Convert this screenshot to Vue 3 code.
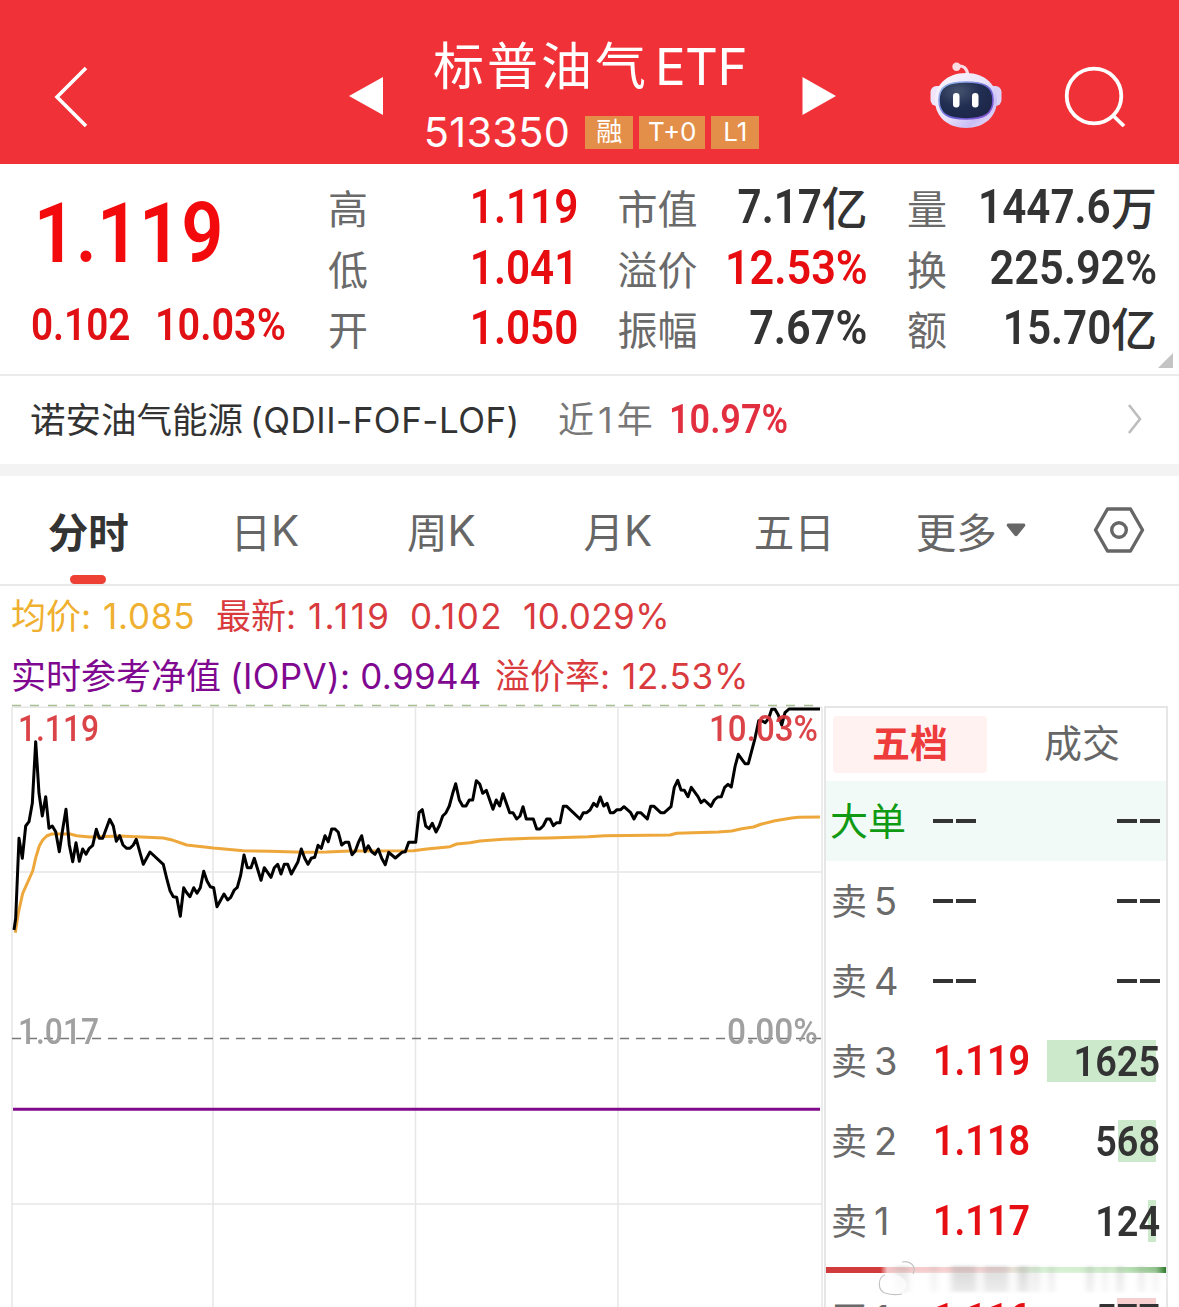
<template>
  <div class="page">
    <header class="topbar">
      <svg class="back" width="36" height="64" viewBox="0 0 36 64">
        <path d="M33 4 L4 33 L33 62" fill="none" stroke="#fff" stroke-width="3.6" />
      </svg>
      <svg class="prev" width="34" height="38" viewBox="0 0 34 38"><path d="M0 19 L34 0 V38 Z" fill="#fff" /></svg>

      <div class="title-block">
        <div class="title">标普油气<span class="title-latin">ETF</span></div>
        <div class="code-row">
          <span class="code">513350</span>
          <span v-for="tag in tags" :key="tag" class="tag" :class="{ wide: tag.length > 2 }">{{ tag }}</span>
        </div>
      </div>

      <svg width="34" height="38" viewBox="0 0 34 38"><path d="M0.500 0 L34 19 L0.500 38 Z" fill="#fff" /></svg>

      <svg class="robot" width="72" height="68" viewBox="0 0 72 68">
        <defs>
          <linearGradient id="shell" x1="0" y1="0" x2="1" y2="1">
            <stop offset="0" stop-color="#fdf6fb" />
            <stop offset="0.5" stop-color="#e9e3fb" />
            <stop offset="0.75" stop-color="#c9bef5" />
            <stop offset="1" stop-color="#f6e9fa" />
          </linearGradient>
          <linearGradient id="rim" x1="0" y1="0" x2="1" y2="1">
            <stop offset="0" stop-color="#9ec6ee" />
            <stop offset="0.6" stop-color="#6a62d8" />
            <stop offset="1" stop-color="#8b4fd0" />
          </linearGradient>
          <radialGradient id="face" cx="0.35" cy="0.25" r="0.8">
            <stop offset="0" stop-color="#46536f" />
            <stop offset="0.5" stop-color="#222f52" />
            <stop offset="1" stop-color="#1b2548" />
          </radialGradient>
        </defs>
        <path d="M27 4.500 C33 3 37 6 38 13" fill="none" stroke="#fbdde8" stroke-width="3" />
        <circle cx="26.500" cy="4.800" r="4.200" fill="#fbdce4" />
        <rect x="0.500" y="24" width="14" height="20" rx="6" fill="#f0e4fa" />
        <rect x="57.500" y="24" width="14" height="20" rx="6" fill="#dcd2f7" />
        <path d="M36 11 C56 11 67 24 67 38 C67 55 54 66 36 66 C18 66 5 55 5 38 C5 24 16 11 36 11 Z" fill="url(#shell)" />
        <path d="M36 20 C54 20 63 24 63 38 C63 52 54 57 36 57 C18 57 9 52 9 38 C9 24 18 20 36 20 Z" fill="url(#face)" stroke="url(#rim)" stroke-width="1.600" />
        <rect x="23" y="31" width="6.500" height="14.500" rx="3.200" fill="#fff" />
        <rect x="42" y="31" width="6.500" height="14.500" rx="3.200" fill="#fff" />
      </svg>

      <svg class="search" width="62" height="62" viewBox="0 0 62 62">
        <circle cx="30" cy="31" r="27.300" fill="none" stroke="#fff" stroke-width="3.800" />
        <path d="M49 50.500 L60 61" stroke="#fff" stroke-width="3.800" />
      </svg>
    </header>

    <section class="quote">
      <div class="quote-main">
        <div class="price num">1.119</div>
        <div class="change">
          <span class="num slim">0.102</span>
          <span class="num">10.03%</span>
        </div>
      </div>
      <div class="stats">
        <div v-for="s in stats" :key="s.label" class="stat">
          <span class="stat-label">{{ s.label }}</span>
          <span class="stat-value" :class="{ up: s.up }">
            <span class="num" :class="{ slim: !s.value.includes('%') }">{{ s.value }}</span>
            <span v-if="s.unit" class="unit">{{ s.unit }}</span>
          </span>
        </div>
      </div>
      <i class="corner"></i>
    </section>

    <section class="fund">
      <span class="fund-name">诺安油气能源<span class="fund-latin">(QDII-FOF-LOF)</span></span>
      <span class="fund-period">近<span class="one">1</span>年</span>
      <span class="fund-value num">10.97%</span>
      <svg class="chevron" width="16" height="32" viewBox="0 0 16 32">
        <path d="M2 1 L13 15 L2 29" fill="none" stroke="#bdbdbd" stroke-width="2.600" />
      </svg>
    </section>

    <nav class="tabs">
      <div v-for="t in tabs" :key="t.name" class="tab" :class="{ active: t.name === activeTab }" @click="activeTab = t.name">
        {{ t.name }}<span v-if="t.latin" class="tab-latin">{{ t.latin }}</span>
        <svg v-if="t.more" class="caret" width="20" height="14" viewBox="0 0 20 14">
          <path d="M1.500 0.500 H18.500 L19.500 2.500 L11.500 12.500 Q10 14 8.500 12.500 L0.500 2.500 Z" fill="#666" />
        </svg>
      </div>
      <div class="settings">
        <svg width="52" height="46" viewBox="0 0 52 46">
          <path d="M14.500 2 H37.500 L49.500 23 L37.500 44 H14.500 L2.500 23 Z" fill="none" stroke="#666" stroke-width="3.400" stroke-linejoin="round" />
          <circle cx="26" cy="23" r="7.300" fill="none" stroke="#666" stroke-width="3.400" />
        </svg>
      </div>
    </nav>

    <section class="summary">
      <div class="summary-row">
        <span class="avg">均价: <b class="avg-value">1.085</b></span>
        <span class="last">最新: <b class="loose">1.119</b></span>
        <span class="diff">0.102</span>
        <span class="pct">10.029%</span>
      </div>
      <div class="summary-row">
        <span class="iopv">实时参考净值<b class="iopv-name">(IOPV):</b> <b>0.9944</b></span>
        <span class="premium">溢价率: <b class="premium-value">12.53%</b></span>
      </div>
    </section>

    <section class="market">
      <svg class="chart" width="824" height="603" viewBox="0 704 824 603">
        <g stroke="#e6e6e6" stroke-width="1.500">
          <path d="M12 707 V1307 M213 707 V1307 M415.500 707 V1307 M618 707 V1307 M822 707 V1307" />
          <path d="M12 707.300 H822 M12 872 H822 M12 1204 H822" />
        </g>
        <path d="M12 705.500 H822" stroke="#a9bd93" stroke-width="1.400" stroke-dasharray="9 9" />
        <path d="M12 1038.500 H822" stroke="#777" stroke-width="1.600" stroke-dasharray="9 7" />
        <path d="M13 1109.200 H820" stroke="#800a8c" stroke-width="3" />
        <polyline :points="avgLine" fill="none" stroke="#eda73a" stroke-width="3" stroke-linejoin="round" />
        <polyline :points="priceLine" fill="none" stroke="#000" stroke-width="3" stroke-linejoin="round" />
        <g class="axis">
          <text x="18" y="741" textLength="81" lengthAdjust="spacingAndGlyphs" fill="#d8353b">1.119</text>
          <text x="709" y="741" textLength="109" lengthAdjust="spacingAndGlyphs" fill="#d8353b">10.03%</text>
          <text x="18" y="1044" textLength="81" lengthAdjust="spacingAndGlyphs" fill="#999">1.017</text>
          <text x="727" y="1044" textLength="91" lengthAdjust="spacingAndGlyphs" fill="#999">0.00%</text>
        </g>
      </svg>

      <aside class="book">
        <div class="book-tabs">
          <span class="book-tab on">五档</span>
          <span class="book-tab">成交</span>
        </div>
        <div class="level big">
          <span class="level-name">大单</span>
          <span class="dash"><i></i><i></i></span>
          <span class="dash end"><i></i><i></i></span>
        </div>
        <div v-for="l in asks" :key="l.n" class="level">
          <span class="level-name">卖<span class="level-no">{{ l.n }}</span></span>
          <template v-if="l.price">
            <span class="level-price num">{{ l.price }}</span>
            <span class="level-qty">
              <i class="bar" :style="{ width: l.bar + 'px' }"></i>
              <span class="num">{{ l.qty }}</span>
            </span>
          </template>
          <template v-else>
            <span class="dash"><i></i><i></i></span>
            <span class="dash end"><i></i><i></i></span>
          </template>
        </div>
        <div class="ratio"><i></i></div>
        <div class="level">
          <span class="level-name">买<span class="level-no">1</span></span>
          <span class="level-price num">1.116</span>
          <span class="level-qty">
            <i class="bar buy"></i>
            <span class="num">577</span>
          </span>
        </div>

        <!-- faded watermark strip over the bid/ask ratio -->
        <svg class="smudge" width="300" height="40" viewBox="0 0 300 40">
          <defs>
            <filter id="soft" x="-5%" y="-20%" width="110%" height="140%"><feGaussianBlur stdDeviation="3 1.500" /></filter>
            <linearGradient id="fade" x1="0" y1="0" x2="0" y2="1">
              <stop offset="0" stop-color="#999" />
              <stop offset="1" stop-color="#ccc" />
            </linearGradient>
          </defs>
          <g filter="url(#soft)">
            <rect x="12" y="14" width="278" height="20" rx="8" fill="#fff" opacity="0.6" />
            <rect v-for="(s, i) in smudges" :key="i" :x="s[0]" y="7" :width="s[1]" height="26" fill="url(#fade)" :opacity="s[2]" />
          </g>
          <path d="M11 17 C4 19 4 30 11 33 C19 35 28 34 31 29 C35 20 20 12 11 17 Z" fill="#fff" opacity="0.7" />
          <path d="M27 3 C35 1 42 7 38 15 M10 16 C3 18 2 31 10 34 C16 36 22 36 27 35" fill="none" stroke="#c4c4c4" stroke-width="1.200" />
        </svg>
      </aside>
    </section>
  </div>
</template>

<script setup>
import { ref } from "vue";

const tags = ["融", "T+0", "L1"];

const stats = [
  { label: "高", value: "1.119", up: true },
  { label: "市值", value: "7.17", unit: "亿" },
  { label: "量", value: "1447.6", unit: "万" },
  { label: "低", value: "1.041", up: true },
  { label: "溢价", value: "12.53%", up: true },
  { label: "换", value: "225.92%" },
  { label: "开", value: "1.050", up: true },
  { label: "振幅", value: "7.67%" },
  { label: "额", value: "15.70", unit: "亿" },
];

const activeTab = ref("分时");
const tabs = [
  { name: "分时" },
  { name: "日", latin: "K" },
  { name: "周", latin: "K" },
  { name: "月", latin: "K" },
  { name: "五日" },
  { name: "更多", more: true },
];

const asks = [
  { n: 5 },
  { n: 4 },
  { n: 3, price: "1.119", qty: "1625", bar: 109 },
  { n: 2, price: "1.118", qty: "568", bar: 38 },
  { n: 1, price: "1.117", qty: "124", bar: 8 },
];

// x, width, opacity
const smudges = [
  [20, 14, 0.25], [56, 6, 0.2], [76, 26, 0.4], [108, 26, 0.35], [142, 12, 0.4], [157, 8, 0.25],
  [174, 5, 0.3], [212, 6, 0.35], [228, 4, 0.25], [242, 6, 0.35], [264, 5, 0.3], [278, 5, 0.2],
];

// each part: x offset, then "x,y" pairs in thirds of a pixel
const pricePart = [
  [0, "42,690 47,655 57,415 67,475 77,378 87,365 97,310 107,125 117,280 127,348 137,290 147,385 157,378 167,395 178,455 187,395 198,328 208,435 218,485 228,428 238,484 248,447 258,463 268,445 278,436 289,388 298,415 308,415 318,388 329,358 340,378 349,424 359,407 369,435 380,445 390,445 400,435 409,418 430,493 450,456 490,493 500,535 510,572 520,590 530,592 541,649 551,563 560,578 570,590 581,563 591,580 601,563 611,514 621,543 631,560 641,563 651,620 672,582 683,600 692,592 703,570 712,562 722,525 732,465 742,503 753,503 763,475 783,541 793,503 813,532"],
  [810, "13,503 23,493 33,522 43,493 53,493 64,522 84,485 94,447 104,475 114,493 124,475 134,472 144,436 154,445 165,407 175,425 185,387 195,387 205,397 215,435 225,427 236,427 246,464 256,453 265,428 275,407 285,455 295,437 305,455 315,463 325,447 335,475 346,494 356,457 376,474 396,457 406,455 416,427 437,427 447,338 457,329 467,378 477,386 487,370 498,396 508,377 518,348 528,338 538,318 548,280 557,251 568,300 578,318 588,318 598,300 608,300 619,242 629,252 638,280 649,271 669,328 679,300 689,318 699,281 719,338 729,338 740,357 750,348 759,320 769,357 790,357 800,387 810,387 820,377"],
  [1635, "5,357 15,357 25,377 35,368 45,368 55,319 65,319 105,357 115,338 125,338 135,330 146,310 156,319 166,291 176,318 186,310 196,338 206,338 216,329 227,329 237,320 257,338 267,357 277,338 287,338 307,357 317,319 327,319 347,338 358,338 378,320 388,262 398,241 408,270 418,271 429,290 439,262 459,290 468,308 478,300 498,319 508,300 518,291 529,290 539,262 549,253 559,261 570,200 580,163 600,191 610,191 630,115 641,62 651,62 661,68 671,55 680,28 690,28 700,45 710,75 720,38 732,27 825,27"],
];
const avgPart = [
  [0, "46,698 55,640 68,580 98,513 108,470 118,438 128,420 140,408 155,402 210,402 230,407 270,411 360,408 490,414 520,421 560,435 640,444 730,452"],
  [810, "0,454 100,457 170,456 240,453 430,452 470,447 540,440 560,432 600,428 630,423 700,418 780,415"],
  [1635, "10,414 130,410 180,407 375,405 395,400 520,396 560,393 590,386 625,381 650,372 690,362 740,354 760,352 825,351"],
];

function toPoints(parts) {
  return parts
    .flatMap(([dx, str]) =>
      str.split(" ").map((p) => {
        const [x, y] = p.split(",").map(Number);
        return `${((x + dx) / 3).toFixed(1)},${(700 + y / 3).toFixed(1)}`;
      })
    )
    .join(" ");
}

const priceLine = toPoints(pricePart);
const avgLine = toPoints(avgPart);
</script>

<style>
body {
  margin: 0;
  background: #fff;
}
</style>

<style scoped>
.page {
  width: 1179px;
  height: 1307px;
  overflow: hidden;
  background: #fff;
  color: #333;
  font-family: Inter, "Noto Sans CJK SC", sans-serif;
}

.num {
  display: inline-block;
  font-family: Roboto, sans-serif;
  font-weight: 570;
  transform: scaleX(0.9);
  transform-origin: left center;
  white-space: nowrap;
}

.num.slim {
  transform: scaleX(0.88);
}

/* top bar */
.topbar {
  box-sizing: border-box;
  height: 164px;
  padding: 28px 53px 0;
  display: flex;
  align-items: center;
  background: #f03138;
  color: #fff;
}

.prev {
  margin-left: 260px;
}

.title-block {
  width: 419px;
  height: 136px;
}

.title {
  height: 76px;
  line-height: 70px;
  padding-right: 5px;
  text-align: center;
  font-family: "Noto Sans CJK SC", sans-serif;
  font-size: 51px;
  font-weight: 400;
  letter-spacing: 3px;
  white-space: nowrap;
}

.title-latin {
  margin-left: 6px;
  font-family: Inter, sans-serif;
  font-size: 51px;
  letter-spacing: -0.5px;
}

.code-row {
  height: 56px;
  padding-right: 2px;
  display: flex;
  align-items: center;
  justify-content: center;
}

.code {
  margin-right: 15px;
  font-size: 41.500px;
  letter-spacing: 0.3px;
}

.tag {
  width: 48px;
  height: 33px;
  margin-right: 6px;
  line-height: 32px;
  text-align: center;
  font-size: 26px;
  background: #e48f49;
}

.tag:last-child {
  margin-right: 0;
}

.tag.wide {
  width: 66px;
}

.robot {
  margin-left: 94px;
}

.search {
  margin-left: 62px;
}

/* quote */
.quote {
  position: relative;
  box-sizing: border-box;
  height: 212px;
  padding: 13px 22px 0 31px;
  display: flex;
  justify-content: space-between;
  border-bottom: 2px solid #ebebeb;
}

.quote-main {
  color: #f20a0c;
}

.price {
  height: 112px;
  line-height: 114px;
  padding-left: 3px;
  font-size: 84px;
  transform: scaleX(0.88);
}

.change {
  display: grid;
  grid-template-columns: 124px 139px;
  line-height: 72px;
  font-size: 44px;
  color: #e01014;
}

.stats {
  display: grid;
  grid-template-columns: repeat(3, 250px);
  grid-auto-rows: 60.500px;
  column-gap: 39.500px;
}

.stat {
  display: flex;
  justify-content: space-between;
  align-items: center;
  line-height: 60px;
}

.stat-label {
  font-family: "Noto Sans CJK SC", sans-serif;
  font-size: 40px;
  font-weight: 400;
  color: #6a6a6a;
}

.stat-value {
  display: flex;
  align-items: center;
  font-size: 48px;
}

.stat-value.up {
  color: #e60c10;
}

.stat-value .num {
  transform-origin: right center;
}

.unit {
  height: 64px;
  font-family: "Noto Sans CJK SC", sans-serif;
  font-size: 46px;
  font-weight: 500;
}

.corner {
  position: absolute;
  right: 6px;
  bottom: 6px;
  border-left: 15px solid transparent;
  border-bottom: 15px solid #c4c4c4;
}

/* linked fund */
.fund {
  height: 88px;
  padding: 0 36px 0 30px;
  display: flex;
  align-items: center;
  line-height: 88px;
  border-bottom: 12px solid #f3f3f4;
}

.fund-name {
  width: 528px;
  font-size: 35.500px;
  white-space: nowrap;
}

.fund-latin {
  margin-left: 7px;
  font-size: 35px;
  letter-spacing: 0.5px;
}

.fund-period {
  width: 111px;
  font-size: 36px;
  color: #777;
  white-space: nowrap;
}

.fund-period .one {
  margin: 0 4px;
}

.fund-value {
  font-size: 40px;
  color: #e22f40;
}

.chevron {
  margin-left: auto;
}

/* period tabs */
.tabs {
  height: 108px;
  display: flex;
  border-bottom: 2px solid #e9e9e9;
}

.tab {
  position: relative;
  width: 176.500px;
  display: flex;
  align-items: center;
  justify-content: center;
  font-size: 40.500px;
  color: #666;
}

.tab-latin {
  font-size: 42px;
}

.tab.active {
  font-weight: 700;
  color: #333;
}

.tab.active::after {
  content: "";
  position: absolute;
  left: 70px;
  bottom: 0;
  width: 36px;
  height: 9px;
  border-radius: 4.500px;
  background: #ee4035;
}

.caret {
  margin-left: 9px;
}

.settings {
  flex: 1;
  display: flex;
  align-items: center;
  justify-content: center;
}

/* summary lines above the chart */
.summary {
  height: 118px;
  padding-left: 11px;
}

.summary-row {
  height: 60px;
  display: flex;
  align-items: baseline;
  line-height: 61px;
  font-size: 35px;
  color: #d93a3d;
  white-space: nowrap;
}

.summary-row b {
  font-weight: 400;
  letter-spacing: 0.3px;
}

.summary-row b.loose {
  margin-left: 2px;
  letter-spacing: 2.4px;
}

.summary-row b.avg-value {
  margin-left: 2px;
  letter-spacing: 0.8px;
}

.summary-row b.premium-value {
  margin-left: 2px;
  letter-spacing: 0.8px;
}

.avg {
  width: 205px;
  color: #f0b02f;
}

.last {
  width: 194px;
}

.diff {
  width: 113px;
  letter-spacing: 1.4px;
}

.pct {
  letter-spacing: 0.4px;
}

.iopv {
  width: 484px;
  color: #800890;
}

.iopv-name {
  margin-left: 9px;
}

/* chart + order book */
.market {
  height: 603px;
  display: flex;
}

.chart {
  flex: none;
}

.axis {
  font-family: Roboto, sans-serif;
  font-size: 36px;
  font-weight: 500;
  opacity: 0.93;
}

.book {
  position: relative;
  box-sizing: border-box;
  width: 344px;
  height: 620px;
  margin-top: 2px;
  border: 2px solid #e6e6e6;
}

.book-tabs {
  height: 73px;
  padding-left: 7px;
  display: flex;
  align-items: center;
}

.book-tab {
  flex: none;
  width: 154px;
  height: 57px;
  margin-right: 18px;
  line-height: 55px;
  text-align: center;
  font-size: 38px;
  color: #666;
}

.book-tab.on {
  border-radius: 4px;
  background: #fff2f1;
  color: #ee3b3c;
  font-weight: 700;
}

.level {
  position: relative;
  height: 80px;
  padding: 0 6px 0 5px;
  display: flex;
  align-items: center;
  line-height: 80px;
  font-size: 42px;
}

.level.big {
  background: #f2faf7;
}

.level-name {
  width: 102px;
  font-size: 36px;
  color: #6a6a6a;
}

.big .level-name {
  margin-left: -1px;
  width: 103px;
  font-size: 38px;
  color: #109a14;
}

.level-no {
  margin-left: 7px;
  font-size: 38px;
}

.dash {
  display: flex;
  gap: 3px;
}

.dash i {
  width: 20px;
  height: 4px;
  background: #333;
}

.dash.end {
  margin-left: auto;
}

.level-price {
  line-height: 82px;
  color: #e60f13;
}

.level-qty {
  position: relative;
  flex: 1;
  text-align: right;
}

.level-qty .num {
  position: relative;
  transform-origin: right center;
}

.bar {
  position: absolute;
  top: 19px;
  right: 4px;
  height: 42px;
  background: #cce9cb;
}

.bar.buy {
  width: 39px;
  background: #f8cfcf;
}

.ratio {
  height: 18px;
  display: flex;
  align-items: center;
}

.ratio i {
  width: 100%;
  height: 6px;
  background: linear-gradient(90deg, #d23b3c 0 16%, #f3c4c4 18%, #fadcdc 50%, #d9f3d6 62%, #cdecc9 85%, #8fc48a 97%, #2f7a2c 100%);
}

.smudge {
  position: absolute;
  left: 49px;
  top: 551px;
}
</style>
